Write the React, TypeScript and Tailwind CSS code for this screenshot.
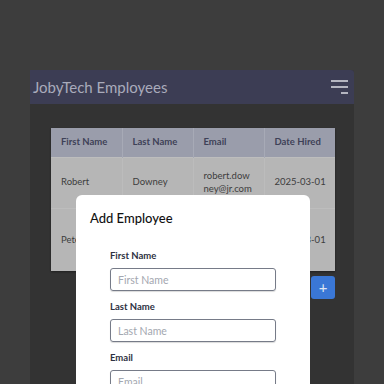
import React from "react";

const rows = [
  { first: "Robert", last: "Downey", email: "robert.downey@jr.com", date: "2025-03-01" },
  { first: "Peter", last: "Parker", email: "peter.wellington@jr.com", date: "2025-03-01" },
];

function Field({ label }: { label: string }) {
  return (
    <div className="flex flex-col">
      <label className="text-[9.5px] leading-[12px] font-bold text-[#2d3142]">{label}</label>
      <input
        placeholder={label}
        className="mt-[6px] h-[23px] w-full rounded-[3px] border border-[#767b88] px-[7px] text-[10.5px] text-[#333] placeholder:text-[#a3a7b0] shadow-[0_1px_1px_rgba(0,0,0,0.15)] outline-none"
      />
    </div>
  );
}

export default function App() {
  return (
    <div
      className="relative h-[384px] w-[384px] overflow-hidden bg-[#3d3d3d]"
      style={{ fontFamily: 'Lato, "Noto Sans", sans-serif' }}
    >
      <div className="ml-[30px] mt-[70px] h-[314px] w-[324px] rounded-tr-[3px] bg-[#333333]">
        <div className="flex h-[34px] items-center justify-between rounded-tr-[3px] bg-[#3c3d54] pl-[3px] pr-[6px]">
          <span className="text-[15px] leading-none text-[#a9abbb]">JobyTech Employees</span>
          <div className="flex w-[17px] flex-col items-end gap-[4.5px]">
            <span className="block h-[1.5px] w-[17px] bg-[#b4b5c0]" />
            <span className="block h-[1.5px] w-[17px] bg-[#b4b5c0]" />
            <span className="block h-[1.5px] w-[7px] bg-[#b4b5c0]" />
          </div>
        </div>
        <div className="pl-[21px] pt-[24px]">
          <div className="w-[284px]">
            <table className="w-full table-fixed border-collapse shadow-[0_1px_2px_rgba(0,0,0,0.4)]">
              <thead>
                <tr className="h-[29px] bg-[#9a9dab]">
                  {["First Name", "Last Name", "Email", "Date Hired"].map((h) => (
                    <th
                      key={h}
                      className="whitespace-nowrap border-x border-[#a7aab6] px-[10px] text-left text-[9.5px] font-bold text-[#3e4157] first:border-l-0 last:border-r-0"
                    >
                      {h}
                    </th>
                  ))}
                </tr>
              </thead>
              <tbody className="bg-[#b6b6b6]">
                {rows.map((r) => (
                  <tr key={r.first} className="border-t border-[#bdbdbd]">
                    {[r.first, r.last, r.email, r.date].map((c, i) => (
                      <td
                        key={i}
                        className={`${i === 2 ? "break-all" : "whitespace-nowrap"} border-x border-[#bcbcbc] px-[10px] py-[12.5px] text-[9.5px] leading-[12.5px] text-[#3d3d3d] first:border-l-0 last:border-r-0`}
                      >
                        {c}
                      </td>
                    ))}
                  </tr>
                ))}
              </tbody>
            </table>
            <div className="mt-[5px] flex justify-end">
              <button className="flex h-[23px] w-[24px] items-center justify-center rounded-[3px] bg-[#3a77d6] text-[15px] leading-none text-[#dfe6f3]">
                +
              </button>
            </div>
          </div>
        </div>
      </div>

      <div className="absolute left-[76px] top-[195px] h-[220px] w-[234px] rounded-[6px] bg-white px-[14px] pt-[14px]">
        <h2 className="text-[13px] leading-[18px] font-medium text-[#111]">Add Employee</h2>
        <div className="mx-auto mt-[23px] flex w-[166px] flex-col gap-[10px]">
          <Field label="First Name" />
          <Field label="Last Name" />
          <Field label="Email" />
        </div>
      </div>
    </div>
  );
}
